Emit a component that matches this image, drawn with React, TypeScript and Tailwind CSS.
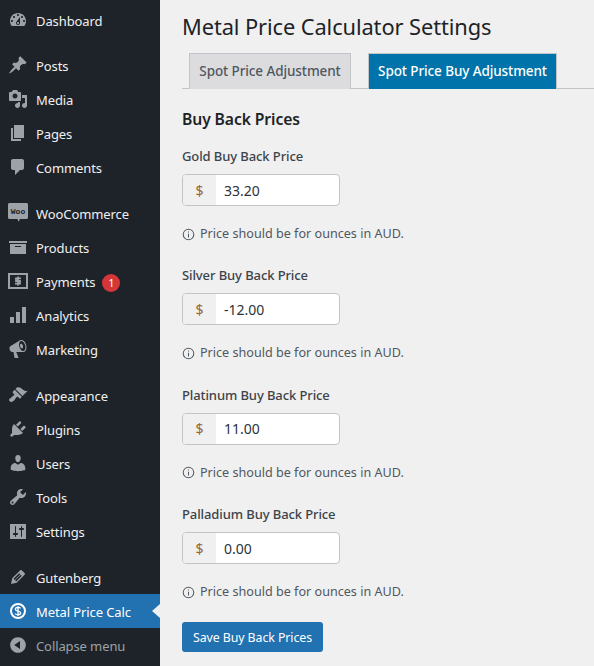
import type { ReactNode } from "react";

const ICONS: Record<string, ReactNode> = {
  dashboard: <path d="M3.76 16h12.48c1.1-1.37 1.76-3.11 1.76-5 0-4.42-3.58-8-8-8s-8 3.58-8 8c0 1.89.66 3.63 1.76 5zM10 4c.55 0 1 .45 1 1s-.45 1-1 1-1-.45-1-1 .45-1 1-1zM6 6c.55 0 1 .45 1 1s-.45 1-1 1-1-.45-1-1 .45-1 1-1zm8 0c.55 0 1 .45 1 1s-.45 1-1 1-1-.45-1-1 .45-1 1-1zm-5.37 5.55L12 7v6c0 1.1-.9 2-2 2s-2-.9-2-2c0-.57.24-1.08.63-1.45zM4 10c.55 0 1 .45 1 1s-.45 1-1 1-1-.45-1-1 .45-1 1-1zm12 0c.55 0 1 .45 1 1s-.45 1-1 1-1-.45-1-1 .45-1 1-1zm-5 3c0-.55-.45-1-1-1s-1 .45-1 1 .45 1 1 1 1-.45 1-1z" />,
  posts: <path d="M10.44 3.02l1.82-1.82 6.36 6.35-1.83 1.82c-1.05-.68-2.48-.57-3.41.36l-.75.75c-.92.93-1.04 2.35-.35 3.41l-1.83 1.82-2.41-2.41-2.8 2.79c-.42.42-3.38 2.71-3.8 2.29s1.86-3.39 2.28-3.81l2.79-2.79L4.1 9.36l1.83-1.82c1.05.69 2.48.57 3.4-.36l.75-.75c.93-.92 1.05-2.35.36-3.41z" />,
  media: <path d="M13 11V4c0-.55-.45-1-1-1h-1.67L9 1H5L3.67 3H2c-.55 0-1 .45-1 1v7c0 .55.45 1 1 1h10c.55 0 1-.45 1-1zM7 4.5c1.38 0 2.5 1.12 2.5 2.5S8.38 9.5 7 9.5 4.5 8.38 4.5 7 5.62 4.5 7 4.5zM14 6h5v10.5c0 1.38-1.12 2.5-2.5 2.5S14 17.88 14 16.5s1.12-2.5 2.5-2.5c.17 0 .34.02.5.05V9h-3V6zm-4 8.05V13h2v3.5c0 1.38-1.12 2.5-2.5 2.5S7 17.88 7 16.5 8.12 14 9.5 14c.17 0 .34.02.5.05z" />,
  pages: <path d="M6 15V2h10v13H6zm-1 1h8v2H3V5h2v11z" />,
  comments: <path d="M5 2h9c1.1 0 2 .9 2 2v7c0 1.1-.9 2-2 2h-2l-5 5v-5H5c-1.1 0-2-.9-2-2V4c0-1.1.9-2 2-2z" />,
  woo: (
    <>
      <path d="M1.5 0h17c.8 0 1.5.7 1.5 1.5v13c0 .8-.7 1.5-1.5 1.5h-6.5l-1.5 2.8-1-2.8H1.5C.7 16 0 15.300 0 14.500v-13C0 .7.7 0 1.500 0z" />
      <text x="10" y="10.500" textAnchor="middle" fontSize="8" fontWeight="700" fill="#1d2327" fontFamily="'Liberation Mono', monospace">Woo</text>
    </>
  ),
  products: <path d="M19 4v2H1V4h18zM2 7h16v10H2V7zm11 3V9H7v1h6z" />,
  payments: (
    <>
      <path fillRule="evenodd" d="M0 2h20v16H0V2zm2 2v12h16V4H2z" />
      <path d="M13 7.300H8v2.700h4v2.700H7M10 5.500v9" fill="none" stroke="currentColor" strokeWidth="1.800" />
    </>
  ),
  analytics: <path d="M18 18V2h-4v16h4zm-6 0V7H8v11h4zm-6 0v-6H2v6h4z" />,
  marketing: <path d="M18.15 5.94c.46 1.62.38 3.22-.02 4.48-.42 1.28-1.26 2.18-2.3 2.48-.16.06-.26.06-.4.06-.06.02-.12.02-.18.02-.06.02-.14.02-.22.02h-6.8l2.22 5.5c.02.14-.06.26-.14.34-.08.1-.24.16-.34.16H6.95c-.1 0-.26-.06-.34-.16-.08-.08-.16-.2-.14-.34l-1-5.5H4.25l-.02-.02c-.5.06-1.08-.18-1.54-.62s-.88-1.08-1.06-1.88c-.24-.8-.2-1.56-.02-2.2.18-.62.58-1.08 1.06-1.3l.02-.02 9-5.4c.1-.06.18-.1.24-.16.06-.04.14-.08.24-.12.16-.08.28-.12.5-.18 1.04-.3 2.24.1 3.22 1 .98.88 1.82 2.24 2.26 3.84zm-2.58 5.98h-.02c.4-.1.74-.34 1.04-.7.58-.7.86-1.76.86-3.04 0-.64-.1-1.3-.28-1.98-.34-1.36-1.02-2.5-1.78-3.24s-1.68-1.1-2.46-.88c-.82.22-1.4.96-1.7 2-.32 1.04-.28 2.36.06 3.72.38 1.36 1 2.5 1.8 3.24.78.74 1.62 1.1 2.48.88zm-2.54-7.08c.22-.04.42-.02.62.04.38.16.76.48 1.02 1s.42 1.2.42 1.78c0 .3-.04.56-.12.8-.18.48-.44.84-.86.94-.34.1-.8-.06-1.14-.4-.34-.32-.66-.84-.82-1.4-.18-.56-.22-1.1-.18-1.56.04-.46.2-.9.5-1.1.16-.06.32-.1.56-.1z" />,
  appearance: <path d="M14.48 11.06L7.41 3.99l1.5-1.5c.5-.56 2.3-.47 3.51.32 1.21.8 1.43 1.28 2.91 2.1 1.18.64 2.45 1.26 4.45.85zm-.71.71L6.7 4.7 4.93 6.47c-.39.39-.39 1.02 0 1.41l1.06 1.06c.39.39.39 1.03 0 1.42-.6.6-1.43 1.11-2.21 1.69-.35.26-.7.53-1.01.84C1.43 13.23.4 14.85 1.56 16.01c.18.18.36.36.53.53 1.16 1.16 2.78.13 4.13-1.21.31-.31.58-.66.84-1.01.58-.78 1.09-1.61 1.69-2.21.39-.39 1.03-.39 1.42 0l1.06 1.06c.39.39 1.02.39 1.41 0z" />,
  plugins: <path d="M13.11 4.36L9.87 7.6 8 5.73l3.24-3.24c.35-.34 1.05-.2 1.56.32.52.51.66 1.21.31 1.55zm-8 1.77l.91-1.12 9.01 9.01-1.19.84c-.71.71-2.63 1.16-3.82 1.16H6.14L4.9 17.26c-.59.59-1.54.59-2.12 0-.59-.58-.59-1.53 0-2.12l1.24-1.24v-3.88c0-1.13.4-3.19 1.09-3.89zm7.26 3.97l3.24-3.24c.34-.35 1.04-.21 1.55.31.52.51.66 1.21.31 1.55l-3.24 3.25z" />,
  users: <path d="M10 9.25c-2.27 0-2.73-3.44-2.73-3.44C7 4.02 7.82 2 9.97 2c2.16 0 2.98 2.02 2.71 3.81 0 0-.41 3.44-2.68 3.44zm0 2.57L12.72 10c2.39 0 4.52 2.33 4.52 4.53v2.49s-3.65 1.13-7.24 1.13c-3.65 0-7.24-1.13-7.24-1.13v-2.49c0-2.25 1.94-4.48 4.47-4.48z" />,
  tools: <path d="M16.68 9.77c-1.34 1.34-3.3 1.67-4.95.99l-5.41 6.52c-.99.99-2.59.99-3.58 0s-.99-2.59 0-3.57l6.52-5.42c-.68-1.65-.35-3.61.99-4.95 1.28-1.28 3.12-1.62 4.72-1.06l-2.89 2.89 2.82 2.82 2.86-2.87c.53 1.58.18 3.39-1.08 4.65zM3.81 16.21c.4.39 1.04.39 1.43 0 .4-.4.4-1.04 0-1.43-.39-.4-1.03-.4-1.43 0-.39.39-.39 1.03 0 1.43z" />,
  settings: <path fillRule="evenodd" d="M18 18V3H2v15h16zM8 12h1c.55 0 1 .45 1 1s-.45 1-1 1H8v1.5c0 .28-.22.5-.5.5s-.5-.22-.5-.5V14H6c-.55 0-1-.45-1-1s.45-1 1-1h1V5.500c0-.28.22-.5.5-.5s.5.22.5.5V12zm5-3h-1c-.55 0-1-.45-1-1s.45-1 1-1h1V5.500c0-.28.22-.5.5-.5s.5.22.5.5V7h1c.55 0 1 .45 1 1s-.45 1-1 1h-1v6.500c0 .28-.22.5-.5.5s-.5-.22-.5-.5V9z" />,
  gutenberg: <path d="M13.89 3.39l2.71 2.72c.46.46.42 1.24.03 1.64l-8.01 8.02-5.56 1.16 1.16-5.58s7.6-7.63 7.99-8.03c.39-.39 1.22-.39 1.68.07zm-2.73 2.79l-5.59 5.61 1.11 1.11 5.54-5.65zm-2.97 8.23l5.58-5.6-1.07-1.08-5.59 5.6z" />,
  dollar: (
    <>
      <circle cx="10" cy="10" r="7" fill="none" stroke="currentColor" strokeWidth="2" />
      <path d="M12.6 7.4c-.5-.7-1.4-1-2.6-1-1.5 0-2.6.7-2.6 1.8 0 2.6 5.3 1.1 5.3 3.7 0 1.1-1.2 1.8-2.7 1.8-1.3 0-2.3-.4-2.8-1.2M10 5v10" fill="none" stroke="currentColor" strokeWidth="1.3" />
    </>
  ),
  collapse: <path d="M10 2.16c4.33 0 7.84 3.51 7.84 7.84s-3.51 7.84-7.84 7.84S2.16 14.33 2.16 10 5.71 2.16 10 2.16zm2 11.72V6.12L6.18 9.97z" />,
};

const MENU_GROUPS = [
  [
    { icon: "posts", label: "Posts" },
    { icon: "media", label: "Media" },
    { icon: "pages", label: "Pages" },
    { icon: "comments", label: "Comments" },
  ],
  [
    { icon: "woo", label: "WooCommerce" },
    { icon: "products", label: "Products" },
    { icon: "payments", label: "Payments", badge: "1" },
    { icon: "analytics", label: "Analytics" },
    { icon: "marketing", label: "Marketing" },
  ],
  [
    { icon: "appearance", label: "Appearance" },
    { icon: "plugins", label: "Plugins" },
    { icon: "users", label: "Users" },
    { icon: "tools", label: "Tools" },
    { icon: "settings", label: "Settings" },
  ],
];

const FIELDS = [
  { label: "Gold Buy Back Price", value: "33.20" },
  { label: "Silver Buy Back Price", value: "-12.00" },
  { label: "Platinum Buy Back Price", value: "11.00" },
  { label: "Palladium Buy Back Price", value: "0.00" },
];

const MenuIcon = ({ name }: { name: string }) => (
  <svg viewBox="0 0 20 20" className="h-5 w-5 shrink-0 overflow-visible" fill="currentColor">
    {ICONS[name]}
  </svg>
);

const MenuRow = ({ icon, label, badge }: { icon: string; label: string; badge?: string }) => (
  <div className="flex h-[34px] items-center gap-2 pl-2 text-[#9ca2a7]">
    <MenuIcon name={icon} />
    <span className="pt-[4px] text-[13px] tracking-[-0.1px] text-[#f0f0f1]">{label}</span>
    {badge && (
      <span className="-ml-px mt-[4px] flex h-[18px] w-[18px] items-center justify-center rounded-full bg-[#d63638] text-[11px] text-white">
        {badge}
      </span>
    )}
  </div>
);

const Sidebar = () => (
  <aside className="flex h-[666px] w-40 shrink-0 flex-col bg-[#1e2329] pt-[3px]">
    <div className="-mb-px">
      <MenuRow icon="dashboard" label="Dashboard" />
    </div>
    <div className="mt-3 flex flex-col gap-3">
      {MENU_GROUPS.map((group, i) => (
        <div key={i} className="flex flex-col">
          {group.map((item) => (
            <MenuRow key={item.label} {...item} />
          ))}
        </div>
      ))}
      <MenuRow icon="gutenberg" label="Gutenberg" />
    </div>
    <div className="relative flex h-[34px] items-center gap-2 bg-[#2271b1] pl-2 text-white">
      <MenuIcon name="dollar" />
      <span className="pt-[4px] text-[13px] tracking-[-0.1px]">Metal Price Calc</span>
      <span className="absolute top-[10px] right-0 h-0 w-0 border-y-[7px] border-r-[8px] border-y-transparent border-r-[#f0f0f0]" />
    </div>
    <div className="flex h-[34px] items-center gap-2 pl-2 text-[#9ca2a7]">
      <MenuIcon name="collapse" />
      <span className="pt-[4px] text-[13px] tracking-[-0.1px]">Collapse menu</span>
    </div>
  </aside>
);

const PriceField = ({ label, value }: { label: string; value: string }) => (
  <div className="flex h-[119.4px] flex-col">
    <label className="text-[13px] leading-5 font-medium tracking-[-0.1px] text-[#3c434a]">{label}</label>
    <div className="mt-2 flex h-8 w-[158px] overflow-hidden rounded border border-[#c3c4c7] bg-white">
      <span className="flex w-[33px] items-center justify-center bg-[#f0f0f1] text-[14px] text-[#996633]">$</span>
      <span className="flex items-center pl-[8px] text-[14px] text-[#2c3338]">{value}</span>
    </div>
    <p className="mt-[18px] flex items-center gap-[5px] text-[12.6px] leading-5 text-[#50575e]">
      <svg viewBox="0 0 14 14" className="h-[13px] w-[13px] shrink-0" fill="none" stroke="currentColor" strokeWidth="1.1">
        <circle cx="7" cy="7" r="5.7" />
        <path d="M7 6.2v4M7 3.7v1.2" />
      </svg>
      Price should be for ounces in AUD.
    </p>
  </div>
);

export default function App() {
  return (
    <div className="flex h-[666px] w-[594px] overflow-hidden bg-[#f0f0f0] font-['Noto_Sans',sans-serif]">
      <Sidebar />
      <main className="min-w-0 flex-1 pl-[22px]">
        <h1 className="pt-[10px] text-[21.85px] leading-[34px] tracking-[-0.1px] text-[#1d2327]">
          Metal Price Calculator Settings
        </h1>
        <div className="mt-[9px] flex h-9 gap-[17px] border-b border-[#c3c4c7] pl-[7px]">
          <div className="flex h-9 w-[162px] items-center justify-center border border-b-0 border-[#c3c4c7] bg-[#dcdcde] text-[13.5px] font-medium tracking-[-0.1px] text-[#50575e]">
            Spot Price Adjustment
          </div>
          <div className="flex h-9 w-[189px] items-center justify-center border border-b-0 border-[#c3c4c7] bg-[#0073aa] text-[13.5px] font-medium tracking-[-0.1px] text-white">
            Spot Price Buy Adjustment
          </div>
        </div>
        <h2 className="mt-[18px] text-[15.7px] leading-6 font-semibold tracking-[-0.1px] text-[#1d2327]">Buy Back Prices</h2>
        <div className="mt-[15px] flex flex-col">
          {FIELDS.map((field) => (
            <PriceField key={field.label} {...field} />
          ))}
        </div>
        <button className="-mt-[2px] flex h-[30px] w-[141px] items-center justify-center rounded-[3px] bg-[#2271b1] pt-[3px] text-[12.4px] tracking-[-0.1px] text-white">
          Save Buy Back Prices
        </button>
      </main>
    </div>
  );
}
